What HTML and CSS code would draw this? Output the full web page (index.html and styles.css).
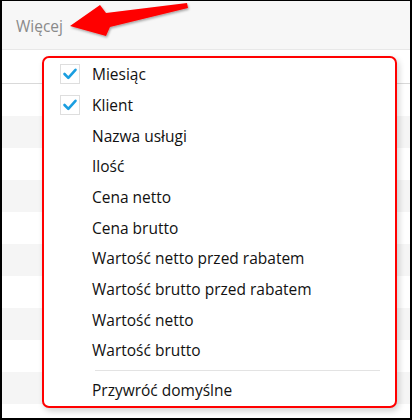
FILE: index.html
```html
<!DOCTYPE html>
<html lang="pl">
<head>
  <meta charset="UTF-8" />
  <title>Więcej – kolumny</title>
  <link rel="stylesheet" href="styles.css">
</head>
<body>

  <div class="screen">
    <!-- Pasek z przyciskiem "Więcej" -->
    <div class="topbar">
      <span class="more">Więcej</span>
    </div>

    <!-- Tabela w tle -->
    <div class="grid">
      <div class="grid-head"></div>
      <div class="grid-row"></div>
      <div class="grid-row odd"></div>
      <div class="grid-row"></div>
      <div class="grid-row odd"></div>
      <div class="grid-row"></div>
      <div class="grid-row odd"></div>
      <div class="grid-row"></div>
      <div class="grid-row odd"></div>
      <div class="grid-row"></div>
      <div class="grid-row odd"></div>
    </div>

    <!-- Strzałka -->
    <svg class="arrow" width="200" height="46" viewBox="0 0 200 46">
      <defs>
        <filter id="shadow" x="-10%" y="-30%" width="120%" height="160%">
          <feDropShadow dx="1" dy="1.5" stdDeviation="1.2" flood-color="#000" flood-opacity="0.35" />
        </filter>
      </defs>
      <polygon points="70,26 100,5 106,13 187,3 188,8 110,27 106,36" fill="#ff0000" filter="url(#shadow)" />
    </svg>

    <!-- Menu kolumn -->
    <ul class="menu">
      <li class="item"><span class="check on"><svg width="20" height="20" viewBox="0 0 20 20"><path d="M4.5 10 L8.3 13.8 L15.5 5.8" /></svg></span>Miesiąc</li>
      <li class="item"><span class="check on"><svg width="20" height="20" viewBox="0 0 20 20"><path d="M4.5 10 L8.3 13.8 L15.5 5.8" /></svg></span>Klient</li>
      <li class="item"><span class="check"></span>Nazwa usługi</li>
      <li class="item"><span class="check"></span>Ilość</li>
      <li class="item"><span class="check"></span>Cena netto</li>
      <li class="item"><span class="check"></span>Cena brutto</li>
      <li class="item"><span class="check"></span>Wartość netto przed rabatem</li>
      <li class="item"><span class="check"></span>Wartość brutto przed rabatem</li>
      <li class="item"><span class="check"></span>Wartość netto</li>
      <li class="item"><span class="check"></span>Wartość brutto</li>
      <li class="separator"></li>
      <li class="item"><span class="check"></span>Przywróć domyślne</li>
    </ul>
  </div>

</body>
</html>
```

FILE: styles.css
```css
body {
  margin: 0;
  font-family: "Open Sans", "Noto Sans", sans-serif;
  background: #fff;
}

.screen {
  position: relative;
  width: 412px;
  height: 420px;
  box-sizing: border-box;
  border: 2px solid #000;
  border-top-width: 1px;
  overflow: hidden;
  background: #fff;
}

/* Górny pasek */
.topbar {
  height: 48px;
  background: #f7f7f7;
  border-bottom: 1px solid #e8e8e8;
  display: flex;
  align-items: center;
  padding-left: 14px;
}
.more {
  font-size: 15.5px;
  color: #8a8a8a;
  margin-top: 1px;
}

/* Tabela w tle */
.grid-head {
  height: 33px;
  border-bottom: 1px solid #d9d9d9;
}
.grid-row {
  height: 32px;
}
.grid-row.odd {
  background: #f5f5f5;
}

/* Strzałka */
.arrow {
  position: absolute;
  left: -2px;
  top: -1px;
}

/* Menu */
.menu {
  position: absolute;
  left: 40px;
  top: 55px;
  width: 355px;
  height: 352px;
  box-sizing: border-box;
  margin: 0;
  padding: 1px 0 0;
  list-style: none;
  background: #fff;
  border: 2px solid #ff0000;
  border-radius: 7px;
  box-shadow: 2px 3px 6px rgba(0, 0, 0, 0.18);
}
.item {
  display: flex;
  align-items: center;
  gap: 12px;
  height: 30.67px;
  padding-left: 16px;
  font-size: 15.5px;
  color: #111;
}
.check {
  width: 20px;
  height: 20px;
  flex: none;
  box-sizing: border-box;
}
.check.on {
  border: 1px solid #dedede;
}
.check svg {
  display: block;
  margin: -1px;
}
.check path {
  fill: none;
  stroke: #1a9ee0;
  stroke-width: 2.6;
  stroke-linecap: round;
  stroke-linejoin: round;
}
.separator {
  height: 1px;
  margin: 4px 15px 4px 51px;
  background: #e3e3e3;
}
```
